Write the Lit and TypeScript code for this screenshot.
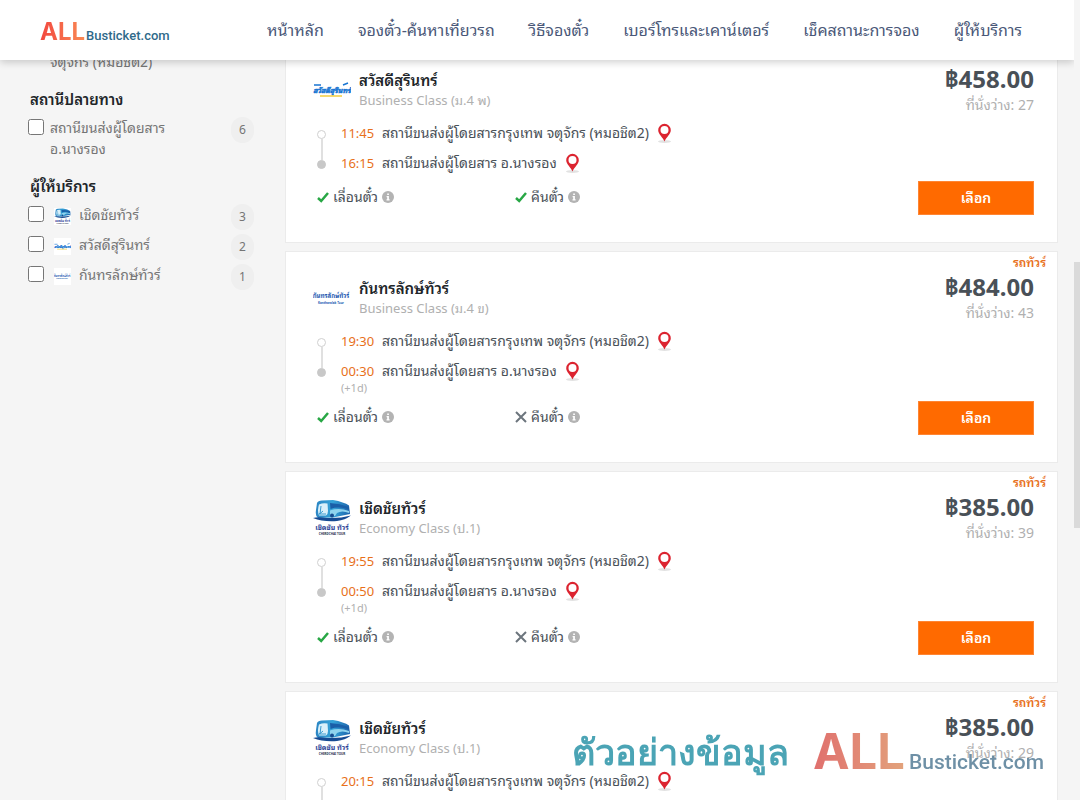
import { LitElement, html, svg, css, nothing } from "lit";
import { customElement, property } from "lit/decorators.js";

type Operator = "cherdchai" | "sawasdee" | "kantharalak";

interface Trip {
  operator: Operator;
  cls: string;
  depart: string;
  arrive: string;
  nextDay: boolean;
  refundable: boolean;
  price: string;
  seats: number;
}

const NAMES: Record<Operator, string> = {
  cherdchai: "เชิดชัยทัวร์",
  sawasdee: "สวัสดีสุรินทร์",
  kantharalak: "กันทรลักษ์ทัวร์",
};

const FROM = "สถานีขนส่งผู้โดยสารกรุงเทพ จตุจักร (หมอชิต2)";
const TO = "สถานีขนส่งผู้โดยสาร อ.นางรอง";

const TRIPS: Trip[] = [
  { operator: "sawasdee", cls: "Business Class (ม.4 พ)", depart: "11:45", arrive: "16:15", nextDay: false, refundable: true, price: "458.00", seats: 27 },
  { operator: "kantharalak", cls: "Business Class (ม.4 ข)", depart: "19:30", arrive: "00:30", nextDay: true, refundable: false, price: "484.00", seats: 43 },
  { operator: "cherdchai", cls: "Economy Class (ป.1)", depart: "19:55", arrive: "00:50", nextDay: true, refundable: false, price: "385.00", seats: 39 },
  { operator: "cherdchai", cls: "Economy Class (ป.1)", depart: "20:15", arrive: "01:10", nextDay: true, refundable: false, price: "385.00", seats: 29 },
];

@customElement("operator-logo")
export class OperatorLogo extends LitElement {
  @property() name: Operator = "cherdchai";

  static styles = css`
    :host { display: block; }
    .art { display: block; width: 100%; height: 100%; }
    .name { font-family: "Noto Sans", "Noto Sans Thai Looped", "Loma", "Noto Sans Thai", sans-serif; font-weight: 700; }
  `;

  render() {
    const art = {
      cherdchai: svg`
        <defs><linearGradient id="body" x1="0" y1="0" x2="1" y2="0">
          <stop offset="0" stop-color="#2c86c4"/><stop offset=".5" stop-color="#35a3d8"/><stop offset="1" stop-color="#1d63ac"/>
        </linearGradient></defs>
        <path d="M4 4 Q5 1.500 9 1.500 L20 1 Q31 3 36 6.500 L37 15 L20 18.500 L5 19 Q2 17 3 11Z" fill="url(#body)"/>
        <path d="M6 5.500 Q10 3.500 14.500 4.500 L15 12 Q15 15 13 16.500 L6 16.500 Q4 12 6 5.500Z" fill="#d9f0fa"/>
        <path d="M7 15 L8 7 M10 12 Q8 14 6 15 H13" stroke="#3a9bd0" stroke-width="1" fill="none"/>
        <path d="M17 4 Q27 4.500 36 8 L36 10.500 Q26 7 17.500 10Z" fill="#1a5fa8"/>
        <path d="M17 11.500 Q26 8.500 36 12 L36 14 Q29 11 24 14 L22 17 H17Z" fill="#8fd3ee"/>
        <circle cx="19" cy="16.500" r="2" fill="#174b8f"/>
        <path d="M0 19 Q5 17.500 14 19 Q27 19.500 38 16.500 Q32 21 24 22 Q10 23 0 19Z" fill="#164a92"/>
        <text class="name" x="19" y="31" font-size="7" text-anchor="middle" fill="#2b3f96">เชิดชัย ทัวร์</text>
        <text class="name" x="19" y="36" font-size="3" text-anchor="middle" fill="#27304f">CHERDCHAI TOUR</text>`,
      sawasdee: svg`
        <text class="name" x="19" y="22" font-size="7" font-style="italic" text-anchor="middle" fill="#1a76d2" stroke="#1a76d2" stroke-width=".5">สวัสดีสุรินทร์</text>
        <path d="M1 14 H8 M30 14 L35 12" stroke="#1a76d2" stroke-width="1.4"/>
        <path d="M7 25 H29" stroke="#f3d04a" stroke-width="1.6"/>`,
      kantharalak: svg`
        <text class="name" x="18" y="19" font-size="6" text-anchor="middle" fill="#2358b0">กันทรลักษ์ทัวร์</text>
        <text class="name" x="18" y="25" font-size="3" text-anchor="middle" fill="#2358b0">Kantharalak Tour</text>`,
    }[this.name];
    return html`<svg class="art" viewBox="0 0 38 38" aria-hidden="true">${art}</svg>`;
  }
}

@customElement("trip-card")
export class TripCard extends LitElement {
  @property({ attribute: false }) trip!: Trip;

  static styles = css`
    :host { display: block; }
    .card {
      display: grid; grid-template-columns: 1fr auto; background: #fff;
      border: 1px solid #ebebeb; padding: 0 23px 27px 27px;
    }
    .info { padding-top: 26px; }
    .head { display: flex; gap: 8px; }
    .logo { width: 38px; height: 38px; margin-top: 1px; }
    .name { margin: 0; font-size: 15px; line-height: 20px; font-weight: 600; color: #212529; }
    .cls { margin: 0; font-size: 13px; line-height: 20px; color: #b0b0b0; }
    .route { display: grid; grid-template-columns: 19px 1fr; column-gap: 9px; margin: 8px 0 0; }
    .track { display: flex; flex-direction: column; align-items: center; height: 39px; padding: 12px 5px 0 3px; }
    .dot { width: 7px; height: 7px; border: 1px solid #d0d0d0; border-radius: 50%; flex: none; }
    .dot.end { background: #c8c8c8; border-color: #c8c8c8; }
    .line { width: 2px; background: #e0e0e0; flex: 1; }
    .stop { display: flex; align-items: center; height: 30px; font-size: 14px; line-height: 30px; color: #495057; white-space: nowrap; }
    .time { width: 33px; margin-right: 8px; font-size: 13px; color: #e8701a; }
    .pin { width: 15px; height: 21px; margin-left: 8px; }
    .next { font-size: 11px; line-height: 12px; height: 12px; color: #b0b0b0; margin-top: -4px; padding-bottom: 4px; }
    .terms { display: grid; grid-template-columns: 198px 1fr; padding: 8px 0 7px 4px; }
    .term { display: flex; align-items: center; gap: 4px; height: 22px; font-size: 14px; line-height: 22px; color: #495057; white-space: nowrap; }
    .mark { width: 12px; height: 12px; }
    .i { width: 12px; height: 12px; }
    .buy { display: flex; flex-direction: column; align-items: flex-end; }
    .kind { font-size: 12px; line-height: 16px; font-weight: 600; color: #e8701a; margin: 3px -12px 0 0; }
    .price { font-size: 24px; line-height: 32px; font-weight: 700; color: #495057; }
    .seats { font-size: 14px; line-height: 20px; color: #b0b0b0; }
    .pick {
      width: 116px; height: 34px; margin-top: auto; padding: 0; border: 1px solid #ff8533; background: #ff6a00;
      color: #fff; font: 600 14px/20px "Noto Sans", "Noto Sans Thai Looped", "Loma", "Noto Sans Thai", sans-serif; cursor: pointer;
    }
  `;

  private pin() {
    return html`<svg class="pin" viewBox="0 0 14 20" aria-hidden="true">
      <ellipse cx="7" cy="17.6" rx="6.2" ry="1.4" fill="#e2e2e2"/>
      <path d="M7 17.5 C5.5 13.5 1 10.6 1 6.8 A6 6 0 0 1 13 6.8 C13 10.6 8.500 13.500 7 17.500Z" fill="#dc2430"/>
      <circle cx="7" cy="6.600" r="3.800" fill="#fff"/></svg>`;
  }

  private term(ok: boolean, label: string) {
    return html`<span class="term">
      <svg class="mark" viewBox="0 0 12 12" aria-hidden="true">
        ${ok
          ? svg`<path d="M1 7 L4.200 10 L11 2" fill="none" stroke="#28a745" stroke-width="2.500"/>`
          : svg`<path d="M1 1 L11 11 M11 1 L1 11" fill="none" stroke="#6c757d" stroke-width="2"/>`}
      </svg>${label}
      <svg class="i" viewBox="0 0 12 12" aria-hidden="true"><circle cx="6" cy="6" r="6" fill="#b3b3b3"/>
        <path d="M5.200 2.500H6.900V4H5.200Z M4.600 5H6.900V8.300H7.600V9.500H4.500V8.300H5.200V6.200H4.600Z" fill="#fff"/></svg>
    </span>`;
  }

  render() {
    const t = this.trip;
    return html`<article class="card">
      <div class="info">
        <div class="head">
          <operator-logo class="logo" .name=${t.operator}></operator-logo>
          <div><h3 class="name">${NAMES[t.operator]}</h3><p class="cls">${t.cls}</p></div>
        </div>
        <div class="route">
          <div class="track"><span class="dot"></span><span class="line"></span><span class="dot end"></span></div>
          <div>
            <div class="stop"><span class="time">${t.depart}</span>${FROM} ${this.pin()}</div>
            <div class="stop"><span class="time">${t.arrive}</span>${TO} ${this.pin()}</div>
            ${t.nextDay ? html`<div class="next">(+1d)</div>` : nothing}
          </div>
        </div>
        <div class="terms">${this.term(true, "เลื่อนตั๋ว")}${this.term(t.refundable, "คืนตั๋ว")}</div>
      </div>
      <div class="buy">
        <span class="kind">รถทัวร์</span>
        <span class="price">฿${t.price}</span>
        <span class="seats">ที่นั่งว่าง: ${t.seats}</span>
        <button class="pick" type="button">เลือก</button>
      </div>
    </article>`;
  }
}

@customElement("app-root")
export class AppRoot extends LitElement {
  static styles = css`
    :host {
      display: flex; height: 100vh; overflow: hidden; position: relative; background: #f5f5f5;
      font-family: "Noto Sans", "Noto Sans Thai Looped", "Loma", "Noto Sans Thai", sans-serif; color: #495057;
    }
    .page { flex: 1; min-width: 0; display: flex; flex-direction: column; overflow: hidden; }
    .bar {
      flex: none; display: flex; align-items: center; justify-content: space-between; height: 60px;
      padding: 0 52px 0 40px; background: #fff; box-shadow: 0 2px 8px rgba(0, 0, 0, .2); position: relative; z-index: 2;
    }
    .brand { display: flex; align-items: baseline; gap: 1px; padding-top: 4px; text-decoration: none; font-family: Roboto, sans-serif; font-weight: 500; }
    .all {
      font-family: Inter, sans-serif; font-weight: 700; font-size: 24px; line-height: 30px; color: transparent;
      background: linear-gradient(90deg, #f2473f, #f98a54); background-clip: text; -webkit-background-clip: text;
    }
    .site { font-size: 13px; color: #2f6a8a; }
    .nav { display: flex; gap: 34px; }
    .link { font-size: 16px; line-height: 24px; color: #4a5878; text-decoration: none; white-space: nowrap; }
    .body { flex: 1; min-height: 0; display: grid; grid-template-columns: 285px 1fr; padding-right: 16px; }
    .side { padding: 0 31px 0 28px; font-size: 14px; line-height: 21px; color: #757575; margin-top: -9px; }
    .cut { margin: 0; padding: 0 0 0 22px; }
    .title { margin: 0; padding: 16px 0 7px 2px; font-size: 15px; line-height: 22px; font-weight: 600; color: #212529; }
    .opts { display: flex; flex-direction: column; gap: 4px; }
    .opt { display: flex; align-items: flex-start; min-height: 26px; }
    .tick { width: 16px; height: 16px; margin: 2px 6px 0 0; flex: none; }
    .label { flex: 1; display: flex; gap: 8px; }
    .station { padding-right: 50px; }
    .mini { width: 17px; height: 17px; margin: 4px 0 0 4px; background: #fff; }
    .count { width: 23px; line-height: 26px; border-radius: 12px; background: #efefef; text-align: center; font-size: 12px; }
    .list { display: flex; flex-direction: column; gap: 8px; margin-top: -17px; }
    .rail { width: 6px; padding-top: 262px; }
    .thumb { height: 266px; background: #dadada; }
    .stamp {
      position: absolute; right: 36px; bottom: 20px; z-index: 3; display: flex; align-items: center; gap: 24px;
      opacity: .8; pointer-events: none; white-space: nowrap;
    }
    .sample { font-family: "Noto Sans", sans-serif; font-size: 36px; line-height: 56px; font-weight: 700; color: #1f8ea3; }
    .mark { display: flex; align-items: baseline; gap: 4px; font-family: Roboto, sans-serif; font-weight: 500; }
    .big {
      font-family: Inter, sans-serif; font-size: 49px; line-height: 56px; font-weight: 700; color: transparent;
      background: linear-gradient(90deg, #d94d4a, #dc8c5c); background-clip: text; -webkit-background-clip: text;
    }
    .addr { font-size: 21px; color: #4b7590; }
  `;

  private operatorRow(id: Operator, count: number) {
    return html`<div class="opt">
      <input class="tick" type="checkbox" id=${id}>
      <label class="label" for=${id}><operator-logo class="mini" .name=${id}></operator-logo>${NAMES[id]}</label>
      <span class="count">${count}</span>
    </div>`;
  }

  render() {
    const links = ["หน้าหลัก", "จองตั๋ว-ค้นหาเที่ยวรถ", "วิธีจองตั๋ว", "เบอร์โทรและเคาน์เตอร์", "เช็คสถานะการจอง", "ผู้ให้บริการ"];
    return html`
      <div class="page">
        <header class="bar">
          <a class="brand" href="#"><span class="all">ALL</span><span class="site">Busticket.com</span></a>
          <nav class="nav">${links.map((l) => html`<a class="link" href="#">${l}</a>`)}</nav>
        </header>
        <div class="body">
          <aside class="side">
            <p class="cut">จตุจักร (หมอชิต2)</p>
            <h2 class="title">สถานีปลายทาง</h2>
            <div class="opts"><div class="opt">
              <input class="tick" type="checkbox" id="station">
              <label class="label station" for="station">${TO}</label>
              <span class="count">6</span>
            </div></div>
            <h2 class="title">ผู้ให้บริการ</h2>
            <div class="opts">
              ${this.operatorRow("cherdchai", 3)}${this.operatorRow("sawasdee", 2)}${this.operatorRow("kantharalak", 1)}
            </div>
          </aside>
          <main class="list">${TRIPS.map((t) => html`<trip-card .trip=${t}></trip-card>`)}</main>
        </div>
      </div>
      <div class="rail"><div class="thumb"></div></div>
      <div class="stamp">
        <span class="sample">ตัวอย่างข้อมูล</span>
        <span class="mark"><span class="big">ALL</span><span class="addr">Busticket.com</span></span>
      </div>`;
  }
}
